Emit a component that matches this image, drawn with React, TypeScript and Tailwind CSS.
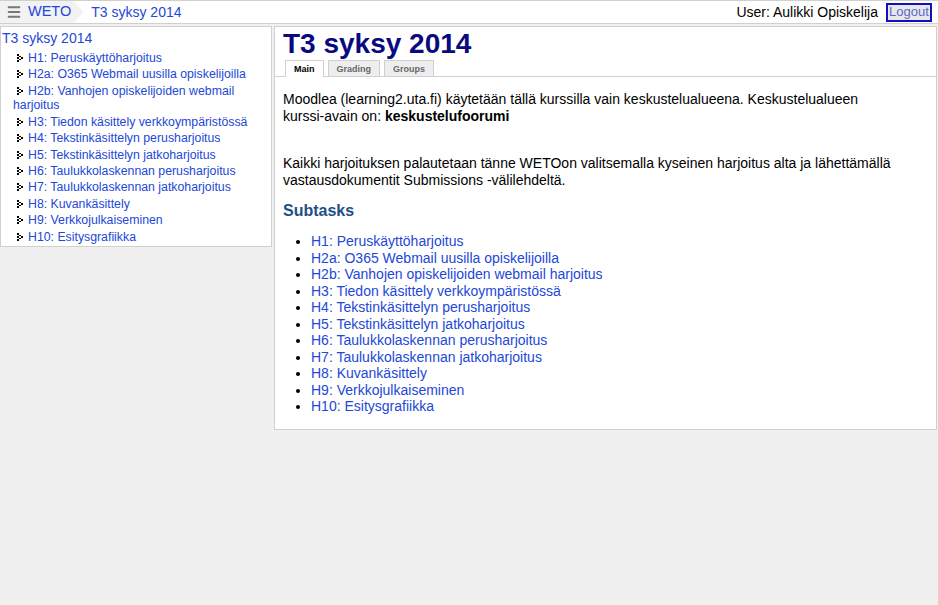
import { Menu } from 'lucide-react'

const subtasks = [
  'H1: Peruskäyttöharjoitus',
  'H2a: O365 Webmail uusilla opiskelijoilla',
  'H2b: Vanhojen opiskelijoiden webmail harjoitus',
  'H3: Tiedon käsittely verkkoympäristössä',
  'H4: Tekstinkäsittelyn perusharjoitus',
  'H5: Tekstinkäsittelyn jatkoharjoitus',
  'H6: Taulukkolaskennan perusharjoitus',
  'H7: Taulukkolaskennan jatkoharjoitus',
  'H8: Kuvankäsittely',
  'H9: Verkkojulkaiseminen',
  'H10: Esitysgrafiikka',
]

function TreeIcon() {
  return (
    <svg width="6" height="8" viewBox="0 0 6 8" className="mr-[5px] inline-block align-[0px]">
      <rect x="0" y="0" width="2" height="2" fill="#000" />
      <rect x="2" y="2" width="2" height="1" fill="#000" />
      <rect x="0" y="3" width="2" height="2" fill="#000" />
      <rect x="4" y="3" width="2" height="2" fill="#000" />
      <rect x="2" y="5" width="2" height="1" fill="#000" />
      <rect x="0" y="6" width="2" height="2" fill="#000" />
    </svg>
  )
}

function TopBar() {
  return (
    <header className="flex h-[24px] items-center justify-between border-y border-[#d0d0d0] bg-white">
      <div className="flex h-full items-center">
        <div className="flex h-full items-center bg-[#f2f2f2] pl-[6px] pr-[12px] [clip-path:polygon(0_0,calc(100%-9px)_0,100%_50%,calc(100%-9px)_100%,0_100%)]">
          <Menu className="h-[16px] w-[16px] text-[#777]" strokeWidth={3} />
          <a className="ml-[6px] text-[14.5px] text-[#2347d8]">WETO</a>
        </div>
        <a className="ml-[8px] text-[14px] text-[#2347d8]">T3 syksy 2014</a>
      </div>
      <div className="flex items-center">
        <span className="text-[14px] text-black">User: Aulikki Opiskelija</span>
        <button className="ml-[8px] mr-[6px] h-[19px] w-[46px] border-2 border-[#1010c0] bg-[#e8e8e8] text-[13px] leading-[14px] text-[#5a6ad0]">
          Logout
        </button>
      </div>
    </header>
  )
}

function Sidebar() {
  return (
    <aside className="w-[272px] shrink-0 border border-[#d0d0d0] bg-white">
      <a className="block pl-[1px] pt-[2px] text-[14px] leading-[19px] text-[#2347d8]">T3 syksy 2014</a>
      <ul className="mt-[3px]">
        {subtasks.map((t) => (
          <li key={t} className="mb-[1.7px] pl-[12px] text-[12.3px] leading-[14.7px] text-[#2347d8]">
            <span className="pl-[4px]"><TreeIcon /></span>
            {t}
          </li>
        ))}
      </ul>
    </aside>
  )
}

export default function App() {
  return (
    <div className="min-h-[605px] bg-[#f0f0f0] font-['Liberation_Sans',Arial,sans-serif]">
      <TopBar />
      <div className="flex items-start gap-[2px] pt-[2px]">
        <Sidebar />
        <main className="mr-[1px] flex-1 border border-[#d0d0d0] bg-white pb-[14px]">
          <h1 className="ml-[8px] mt-[1px] text-[28px] font-bold leading-[32px] text-[#0a0a80]">T3 syksy 2014</h1>
          <div className="flex items-end gap-[4px] border-b border-[#d0d0d0] pl-[10px]">
            <span className="-mb-px border border-b-0 border-[#d0d0d0] bg-white px-[8px] pt-[3px] pb-[3px] text-[9px] font-bold leading-[10px] text-black">Main</span>
            <span className="border border-b-0 border-[#d0d0d0] bg-[#eee] px-[8px] pt-[3px] pb-[2px] text-[9px] font-bold leading-[10px] text-[#666]">Grading</span>
            <span className="border border-b-0 border-[#d0d0d0] bg-[#eee] px-[8px] pt-[3px] pb-[2px] text-[9px] font-bold leading-[10px] text-[#666]">Groups</span>
          </div>
          <div className="px-[8px] pt-[14px] text-[14px] leading-[16.5px] text-black">
            <p className="max-w-[600px]">
              Moodlea (learning2.uta.fi) käytetään tällä kurssilla vain keskustelualueena. Keskustelualueen kurssi-avain on: <b>keskustelufoorumi</b>
            </p>
            <p className="mt-[31px] max-w-[620px]">
              Kaikki harjoituksen palautetaan tänne WETOon valitsemalla kyseinen harjoitus alta ja lähettämällä vastausdokumentit Submissions -välilehdeltä.
            </p>
            <h2 className="mt-[13px] text-[16px] font-bold leading-[20px] text-[#1e4f86]">Subtasks</h2>
            <ul className="mt-[12px] list-disc pl-[28px]">
              {subtasks.map((t) => (
                <li key={t} className="text-[#2347d8] marker:text-black">
                  <a>{t}</a>
                </li>
              ))}
            </ul>
          </div>
        </main>
      </div>
    </div>
  )
}
